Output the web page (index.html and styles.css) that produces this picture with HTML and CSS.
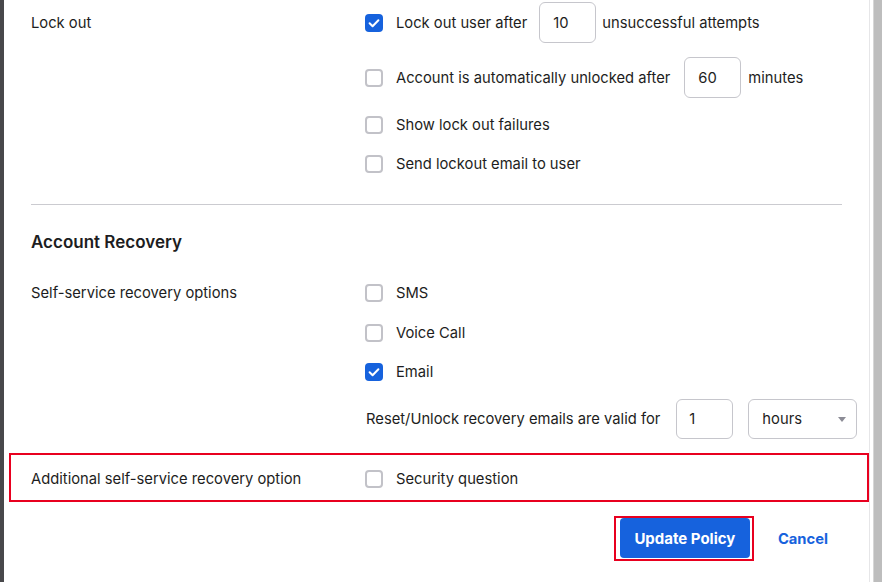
FILE: index.html
```html
<!DOCTYPE html>
<html lang="en">
<head>
<meta charset="utf-8">
<title>Policy</title>
<link rel="stylesheet" href="styles.css">
</head>
<body>
<div class="frame">
  <div class="edge"></div>
  <main class="main">
    <section class="field">
      <div class="label label-tall">Lock out</div>
      <div class="options options-lock">
        <div class="opt opt-tall">
          <span class="cb cb-on"><svg viewBox="0 0 18 18" width="18" height="18"><path d="M4.6 9.3 L7.6 12.2 L13.4 6.2" fill="none" stroke="#fff" stroke-width="2" stroke-linecap="round" stroke-linejoin="round"/></svg></span>
          <span class="txt">Lock out user after</span>
          <span class="num num-a">10</span>
          <span class="txt">unsuccessful attempts</span>
        </div>
        <div class="opt opt-tall">
          <span class="cb"></span>
          <span class="txt">Account is automatically unlocked after</span>
          <span class="num num-b">60</span>
          <span class="txt">minutes</span>
        </div>
        <div class="opt">
          <span class="cb"></span>
          <span class="txt">Show lock out failures</span>
        </div>
        <div class="opt">
          <span class="cb"></span>
          <span class="txt">Send lockout email to user</span>
        </div>
      </div>
    </section>

    <hr class="divider">

    <h2 class="heading">Account Recovery</h2>

    <section class="field">
      <div class="label">Self-service recovery options</div>
      <div class="options options-rec">
        <div class="opt">
          <span class="cb"></span>
          <span class="txt">SMS</span>
        </div>
        <div class="opt">
          <span class="cb"></span>
          <span class="txt">Voice Call</span>
        </div>
        <div class="opt">
          <span class="cb cb-on"><svg viewBox="0 0 18 18" width="18" height="18"><path d="M4.6 9.3 L7.6 12.2 L13.4 6.2" fill="none" stroke="#fff" stroke-width="2" stroke-linecap="round" stroke-linejoin="round"/></svg></span>
          <span class="txt">Email</span>
        </div>
        <div class="opt opt-valid">
          <span class="txt">Reset/Unlock recovery emails are valid for</span>
          <span class="num num-c">1</span>
          <span class="select"><span>hours</span><svg class="caret" viewBox="0 0 8 5" width="8" height="5"><path d="M0 0 L8 0 L4 5 Z" fill="#8c8c96"/></svg></span>
        </div>
      </div>
    </section>

    <section class="field field-hl">
      <div class="label">Additional self-service recovery option</div>
      <div class="options">
        <div class="opt">
          <span class="cb"></span>
          <span class="txt">Security question</span>
        </div>
      </div>
    </section>

    <div class="actions">
      <span class="btn-outline"><button class="btn-primary" type="button">Update Policy</button></span>
      <button class="btn-link" type="button">Cancel</button>
    </div>
  </main>
  <div class="gutter"></div>
  <div class="scrollbar"></div>
</div>
</body>
</html>
```

FILE: styles.css
```css
* { box-sizing: border-box; }

html, body {
  margin: 0;
  padding: 0;
  background: #ffffff;
}

body {
  font-family: Inter, "Noto Sans", "Liberation Sans", sans-serif;
  font-size: 14.75px;
  color: #1d1d21;
  width: 882px;
  height: 582px;
  overflow: hidden;
}

.frame {
  display: flex;
  height: 582px;
}

.edge {
  width: 4px;
  flex: 0 0 4px;
  background: #48484b;
}

.main {
  flex: 0 0 866px;
  width: 866px;
  border-right: 1px solid #e6e6e8;
  padding: 2px 27px 0 27px;
  display: flex;
  flex-direction: column;
}

.gutter {
  flex: 0 0 3px;
}

.scrollbar {
  flex: 0 0 9px;
  background: #bdbdbd;
  border-left: 1px solid #d6d6d6;
}

.field {
  display: grid;
  grid-template-columns: 334px 1fr;
  align-items: start;
}

.label {
  height: 26px;
  display: flex;
  align-items: center;
  white-space: nowrap;
}

.label-tall {
  height: 41px;
}

.options {
  display: flex;
  flex-direction: column;
  gap: 14px;
}

.options-lock .opt:nth-child(4) {
  margin-top: -1px;
}

.options-rec .opt:nth-child(3) {
  margin-top: -1px;
}

.opt {
  height: 26px;
  display: flex;
  align-items: center;
  white-space: nowrap;
}

.opt-tall {
  height: 41px;
}

.cb {
  flex: 0 0 18px;
  width: 18px;
  height: 18px;
  border: 2px solid #c2c2c8;
  border-radius: 4px;
  margin-right: 13px;
  background: #fff;
  display: inline-block;
}

.cb-on {
  border: none;
  background: #1662dd;
}

.cb-on svg {
  display: block;
}

.num {
  flex: 0 0 57px;
  width: 57px;
  height: 41px;
  border: 1px solid #c6c6cc;
  border-radius: 6px;
  display: flex;
  align-items: center;
  padding-left: 13px;
}

.num-a { margin: 0 6px 0 12px; }
.num-b { margin: 0 7px 0 14px; }

.opt-valid {
  height: 40px;
  padding-left: 1px;
}

.num-c {
  height: 40px;
  margin: 0 15px 0 16px;
  padding-left: 12px;
}

.select {
  flex: 0 0 109px;
  width: 109px;
  height: 40px;
  border: 1px solid #c6c6cc;
  border-radius: 6px;
  display: flex;
  align-items: center;
  justify-content: space-between;
  padding: 0 10px 0 13px;
}

.caret {
  display: block;
}

.divider {
  border: 0;
  border-top: 1px solid #cbcbd0;
  margin: 27px 0 0 0;
  height: 0;
}

.heading {
  margin: 25px 0 0 0;
  font-size: 17px;
  font-weight: 600;
  line-height: 24px;
  height: 24px;
}

.heading + .field {
  margin-top: 26px;
}

.field-hl {
  margin: 14px -27px 0 -22px;
  padding: 11px 0 8px 20px;
  border: 2px solid #e8001f;
  grid-template-columns: 334px 1fr;
}

.actions {
  margin-top: 14px;
  display: flex;
  justify-content: flex-end;
  align-items: center;
  gap: 10px;
}

.btn-outline {
  display: flex;
  border: 2px solid #e8001f;
  padding: 0 2px 1px 4px;
}

.btn-primary {
  width: 130px;
  height: 40px;
  border: 0;
  border-radius: 4px;
  background: #1662dd;
  color: #ffffff;
  font-family: Inter, "Noto Sans", "Liberation Sans", sans-serif;
  font-size: 15px;
  font-weight: 700;
  padding: 0;
}

.btn-link {
  border: 0;
  background: transparent;
  color: #1662dd;
  font-family: Inter, "Noto Sans", "Liberation Sans", sans-serif;
  font-size: 14.75px;
  font-weight: 700;
  padding: 0 14px;
  height: 40px;
}
```
